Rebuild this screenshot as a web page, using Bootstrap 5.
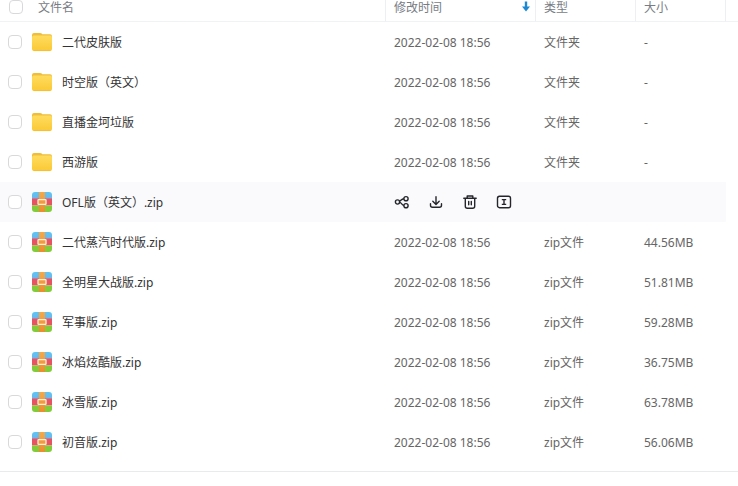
<!DOCTYPE html>
<html lang="zh-CN">
<head>
<meta charset="utf-8">
<meta name="viewport" content="width=device-width, initial-scale=1">
<title>文件列表</title>
<link href="https://cdn.jsdelivr.net/npm/bootstrap@5.3.0/dist/css/bootstrap.min.css" rel="stylesheet">
<style>
body{font:12px/16px "Noto Sans","Noto Sans CJK SC",sans-serif;color:#666;background:#fff}
.file-table{table-layout:fixed;border-collapse:separate;border-spacing:0;line-height:16px}
.file-table>:not(caption)>*>*{border:0;padding:0 8px;color:#666;height:40px;background:transparent;box-shadow:none;vertical-align:middle;white-space:nowrap}
.file-table>thead>tr>th{height:22px;padding:0 8px 5px;border-bottom:1px solid #f1f2f4;border-right:1px solid #eeeff2;font-weight:400;color:#777c85}
.file-table>thead>tr>th.gutter{border-right:0}
.file-table>thead>tr>th:first-child{padding-left:9px}
.file-table>tbody>tr>td.info{padding-top:2px}
.c-time{width:150px}.c-type{width:100px}.c-size{width:90px}.c-gutter{width:12px}
.file-table .form-check-input{width:14px;height:14px;margin:0;border:1px solid #d9d9dc;border-radius:4px;flex:none}
.file-name{color:#333}
.file-name span{padding-top:2px}
.head-name{gap:15px}
.head-time{margin-right:-3px}
.file-line,.file-name{gap:10px}
.tools{gap:18px}
.tool{width:16px;height:16px;border:0;padding:0;color:#25262b;line-height:0}
.file-table>tbody>tr.hovered>td:not(.gutter){background:#fafafc}
.list-end{border-top:1px solid #e9eaec;margin-top:9px}
</style>
<script src="https://cdn.jsdelivr.net/npm/bootstrap@5.3.0/dist/js/bootstrap.bundle.min.js"></script>
</head>
<body>
<svg class="position-absolute" width="0" height="0" aria-hidden="true">
<defs>
<linearGradient id="gold" x1="0" y1="0" x2="0" y2="1"><stop offset="0" stop-color="#ffdc5e"/><stop offset="1" stop-color="#fac935"/></linearGradient>
<linearGradient id="blue" x1="0" y1="0" x2="0" y2="1"><stop offset="0" stop-color="#5bc6f5"/><stop offset="1" stop-color="#70b4ea"/></linearGradient>
<linearGradient id="strap" x1="0" y1="0" x2="0" y2="1"><stop offset="0" stop-color="#f3a94b"/><stop offset="1" stop-color="#ee8b2e"/></linearGradient>
<clipPath id="tile"><rect width="20" height="20" rx="3"/></clipPath>
</defs>
</svg>
<main>
<table class="table file-table w-100 mb-0">
<colgroup><col><col class="c-time"><col class="c-type"><col class="c-size"><col class="c-gutter"></colgroup>
<thead><tr>
<th scope="col"><div class="d-flex align-items-start head-name"><input class="form-check-input" type="checkbox" id="all"><label for="all">文件名</label></div></th>
<th scope="col"><div class="d-flex align-items-start justify-content-between head-time"><span>修改时间</span><svg width="8" height="12" viewBox="0 0 8 12" aria-hidden="true"><path d="M2.800 1.500h2.400v5H8L4 11.500 0 6.500h2.800z" fill="#1c88d2"/></svg></div></th>
<th scope="col">类型</th><th scope="col">大小</th><th class="gutter"></th>
</tr></thead>
<tbody id="files"></tbody>
</table>
<div class="list-end"></div>
</main>
<template id="folder"><svg width="20" height="20" viewBox="0 0 20 20" aria-hidden="true"><path d="M0 3Q0 1 2 1h6q1 0 1.700.6l.6.6H18q2 0 2 2V8H0z" fill="#f0bd39"/><rect y="3.500" width="20" height="15.500" rx="2" fill="url(#gold)"/><path d="M1.500 18.600h17" stroke="#f3bb35" stroke-width=".8"/></svg></template>
<template id="zip"><svg width="20" height="20" viewBox="0 0 20 20" aria-hidden="true"><g clip-path="url(#tile)"><path d="M0 0h20v7H0z" fill="url(#blue)"/><path d="M0 6.500h20v7H0z" fill="#e95361"/><path d="M0 13.500h20V20H0z" fill="#82cc3a"/><path d="M7 0h6v20H7z" fill="url(#strap)"/></g><rect x="6" y="7.700" width="8" height="4.600" rx=".6" fill="#f29a42" stroke="#fff2d8" stroke-width="1.300"/></svg></template>
<template id="tools">
<div class="d-flex align-items-center tools">
<button type="button" class="btn tool" aria-label="分享"><svg width="16" height="16" viewBox="0 0 16 16" fill="none" stroke="currentColor" stroke-width="1.400"><circle cx="3.500" cy="8" r="2.100"/><circle cx="12" cy="4.700" r="2.100"/><circle cx="12" cy="11.700" r="2.100"/><path d="M5.400 7.300C7 6.500 7.500 5 9.900 4.800M5.600 8.400c2 .3 2.200 2.700 4.300 3.100"/></svg></button>
<button type="button" class="btn tool" aria-label="下载"><svg width="16" height="16" viewBox="0 0 16 16" fill="none" stroke="currentColor" stroke-width="1.400" stroke-linecap="round" stroke-linejoin="round"><path d="M8 2.800v7.400M4.800 7.200 8 10.400l3.200-3.200M2.500 9.800v1.500q0 2 2 2h7q2 0 2-2V9.800"/></svg></button>
<button type="button" class="btn tool" aria-label="删除"><svg width="16" height="16" viewBox="0 0 16 16" fill="none" stroke="currentColor" stroke-width="1.400" stroke-linecap="round" stroke-linejoin="round"><path d="M1.800 4.200h12.400M5.200 4V2h5.600v2M3.300 4.500v7.700q0 2 2 2h5.400q2 0 2-2V4.500M6.700 7.500v3.300M9.300 7.500v3.300"/></svg></button>
<button type="button" class="btn tool" aria-label="重命名"><svg width="16" height="16" viewBox="0 0 16 16" fill="none" stroke="currentColor" stroke-width="1.400"><rect x="1.500" y="2.300" width="13" height="11.400" rx="2"/><path d="M5.800 5.600h4.400M5.800 10.400h4.400M8 5.600v4.800"/></svg></button>
</div></template>
<script>
const files = [
  ["二代皮肤版"], ["时空版（英文）"], ["直播金坷垃版"], ["西游版"],
  ["OFL版（英文）.zip", null, true],
  ["二代蒸汽时代版.zip", "44.56MB"], ["全明星大战版.zip", "51.81MB"],
  ["军事版.zip", "59.28MB"], ["冰焰炫酷版.zip", "36.75MB"],
  ["冰雪版.zip", "63.78MB"], ["初音版.zip", "56.06MB"]
];
const part = id => document.getElementById(id).innerHTML;
document.getElementById("files").innerHTML = files.map(([name, size, hovered], i) => {
  const zip = name.endsWith(".zip");
  const details = hovered ? `<td colspan="3">${part("tools")}</td>`
    : `<td class="info">2022-02-08 18:56</td><td class="info">${zip ? "zip文件" : "文件夹"}</td><td class="info">${size || "-"}</td>`;
  return `<tr class="${hovered ? "hovered" : ""}"><td><div class="d-flex align-items-center file-line">
    <input class="form-check-input" type="checkbox" id="f${i}">
    <label for="f${i}" class="file-name d-flex align-items-center">${part(zip ? "zip" : "folder")}<span>${name}</span></label>
    </div></td>${details}<td class="gutter"></td></tr>`;
}).join("");
</script>
</body>
</html>
